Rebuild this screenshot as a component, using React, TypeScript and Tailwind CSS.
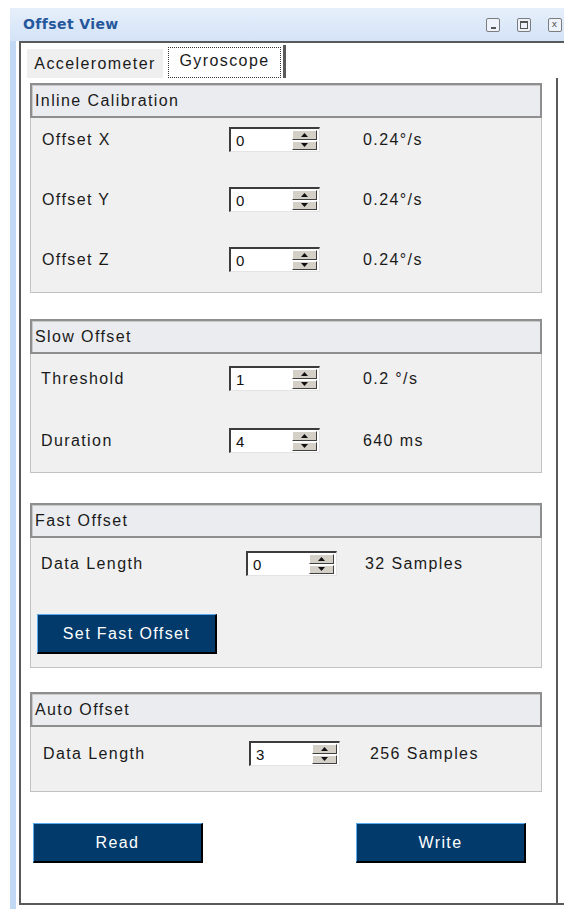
import React from "react";

type RowProps = {
  label: string;
  value: string;
  num: string;
  labelW: string;
  valueGap: string;
};

function Arrow({ up }: { up?: boolean }) {
  return (
    <svg width="7" height="4" viewBox="0 0 7 4" className="block">
      <polygon points={up ? "3.5,0 7,4 0,4" : "0,0 7,0 3.5,4"} fill="#111" />
    </svg>
  );
}

function SpinBtn({ up }: { up?: boolean }) {
  return (
    <div className="flex flex-1 items-center justify-center border border-t-white border-l-white border-b-[#404040] border-r-[#404040] bg-[#d4d0c8]">
      <Arrow up={up} />
    </div>
  );
}

function Spinner({ num }: { num: string }) {
  return (
    <div className="flex h-[25px] w-[91px] shrink-0 border-t-2 border-l-2 border-b border-r border-t-[#3c3c3c] border-l-[#3c3c3c] border-b-[#e4e4e4] border-r-[#e4e4e4] bg-white">
      <span className="flex-1 pl-[5px] text-[15px] leading-[23px] tracking-normal text-[#111]">{num}</span>
      <div className="flex w-[27px] flex-col gap-px py-px pr-[2px]">
        <SpinBtn up />
        <SpinBtn />
      </div>
    </div>
  );
}

function Row({ label, value, num, labelW, valueGap }: RowProps) {
  return (
    <div className="flex h-[25px] items-center">
      <span className={labelW}>{label}</span>
      <Spinner num={num} />
      <span className={valueGap}>{value}</span>
    </div>
  );
}

function Group({
  title,
  bodyClass,
  children,
}: {
  title: string;
  bodyClass: string;
  children: React.ReactNode;
}) {
  return (
    <div className="w-[512px]">
      <div className="flex h-[35px] items-center border-2 border-[#8e8e8e] bg-[#ebecf0] pl-[3px] shadow-[inset_1px_1px_0_#c9c9c9]">
        {title}
      </div>
      <div className={`border-x border-b border-[#c2c2c2] bg-[#f0f0f0] ${bodyClass}`}>{children}</div>
    </div>
  );
}

function NavyButton({ label, className }: { label: string; className: string }) {
  return (
    <button
      className={`flex h-[40px] items-center justify-center border-t border-l border-b-2 border-r-2 border-t-[#5aaaf0] border-l-[#5aaaf0] border-b-black border-r-black bg-[#013a6b] text-white ${className}`}
    >
      {label}
    </button>
  );
}

function TitleButton({ kind }: { kind: "min" | "max" | "close" }) {
  return (
    <div className="flex h-[14px] w-[14px] items-center justify-center rounded-[2px] border border-[#7c7c7c] bg-[#eef3fb]">
      {kind === "min" && <div className="mt-[6px] h-[2px] w-[5px] bg-[#555]" />}
      {kind === "max" && <div className="h-[8px] w-[8px] border border-t-2 border-[#555]" />}
      {kind === "close" && (
        <span className="font-['DejaVu_Sans',sans-serif] text-[9px] leading-none text-[#555]">x</span>
      )}
    </div>
  );
}

export default function App() {
  return (
    <div className="h-[909px] w-[564px] overflow-hidden bg-white pl-[10px] pt-[8px] font-['Liberation_Sans',Arial,sans-serif] text-[16px] tracking-[1.4px] text-[#1a1a1a]">
      <div className="flex h-[901px] w-[580px] flex-col bg-[#c5dbf7]">
        {/* title bar */}
        <div className="flex h-[33px] shrink-0 items-center bg-gradient-to-b from-[#e6effb] to-[#d4e3f7] pl-[13px]">
          <span className="font-['DejaVu_Sans',Verdana,sans-serif] text-[14px] font-bold tracking-[0.4px] text-[#25579b]">
            Offset View
          </span>
          <div className="ml-auto mr-[28px] flex gap-[17px]">
            <TitleButton kind="min" />
            <TitleButton kind="max" />
            <TitleButton kind="close" />
          </div>
        </div>

        <div className="flex flex-1">
          <div className="w-[6px] bg-[#c2d9f6]" />
          <div className="flex-1 bg-white pl-[3px]">
            <div className="flex h-[864px] flex-col border-y-2 border-l-2 border-[#5a5a5a] bg-white">
              {/* tabs */}
              <div className="flex h-[35px] shrink-0 items-end pl-[6px]">
                <div className="flex h-[29px] w-[136px] items-center justify-center bg-[#efefef]">
                  Accelerometer
                </div>
                <div className="ml-[5px] flex h-[31px] w-[113px] items-center justify-center border border-dotted border-[#333] pb-[3px]">
                  Gyroscope
                </div>
                <div className="ml-[2px] h-[33px] w-[3px] bg-[#5a5a5a]" />
              </div>

              {/* tab page */}
              <div className="flex w-[537px] flex-1 flex-col border-r-2 border-[#5a5a5a] pl-[9px] pt-[5px]">
                <Group title="Inline Calibration" bodyClass="h-[175px] pl-[11px] pt-[9px] flex flex-col gap-[35px]">
                  <Row label="Offset X" num="0" value="0.24°/s" labelW="w-[187px]" valueGap="ml-[43px]" />
                  <Row label="Offset Y" num="0" value="0.24°/s" labelW="w-[187px]" valueGap="ml-[43px]" />
                  <Row label="Offset Z" num="0" value="0.24°/s" labelW="w-[187px]" valueGap="ml-[43px]" />
                </Group>

                <div className="mt-[26px]">
                  <Group title="Slow Offset" bodyClass="h-[119px] pl-[10px] pt-[12px] flex flex-col gap-[37px]">
                    <Row label="Threshold" num="1" value="0.2 °/s" labelW="w-[188px]" valueGap="ml-[43px]" />
                    <Row label="Duration" num="4" value="640 ms" labelW="w-[188px]" valueGap="ml-[43px]" />
                  </Group>
                </div>

                <div className="mt-[30px]">
                  <Group title="Fast Offset" bodyClass="h-[130px] pl-[6px] pt-[13px] flex flex-col gap-[38px]">
                    <div className="pl-[4px]">
                      <Row label="Data Length" num="0" value="32 Samples" labelW="w-[205px]" valueGap="ml-[28px]" />
                    </div>
                    <NavyButton label="Set Fast Offset" className="w-[180px]" />
                  </Group>
                </div>

                <div className="mt-[24px]">
                  <Group title="Auto Offset" bodyClass="h-[65px] pl-[12px] pt-[14px]">
                    <Row label="Data Length" num="3" value="256 Samples" labelW="w-[206px]" valueGap="ml-[30px]" />
                  </Group>
                </div>

                <div className="mt-[31px] flex pl-[3px]">
                  <NavyButton label="Read" className="w-[170px]" />
                  <NavyButton label="Write" className="ml-[153px] w-[170px]" />
                </div>
              </div>
            </div>
          </div>
        </div>
      </div>
    </div>
  );
}
